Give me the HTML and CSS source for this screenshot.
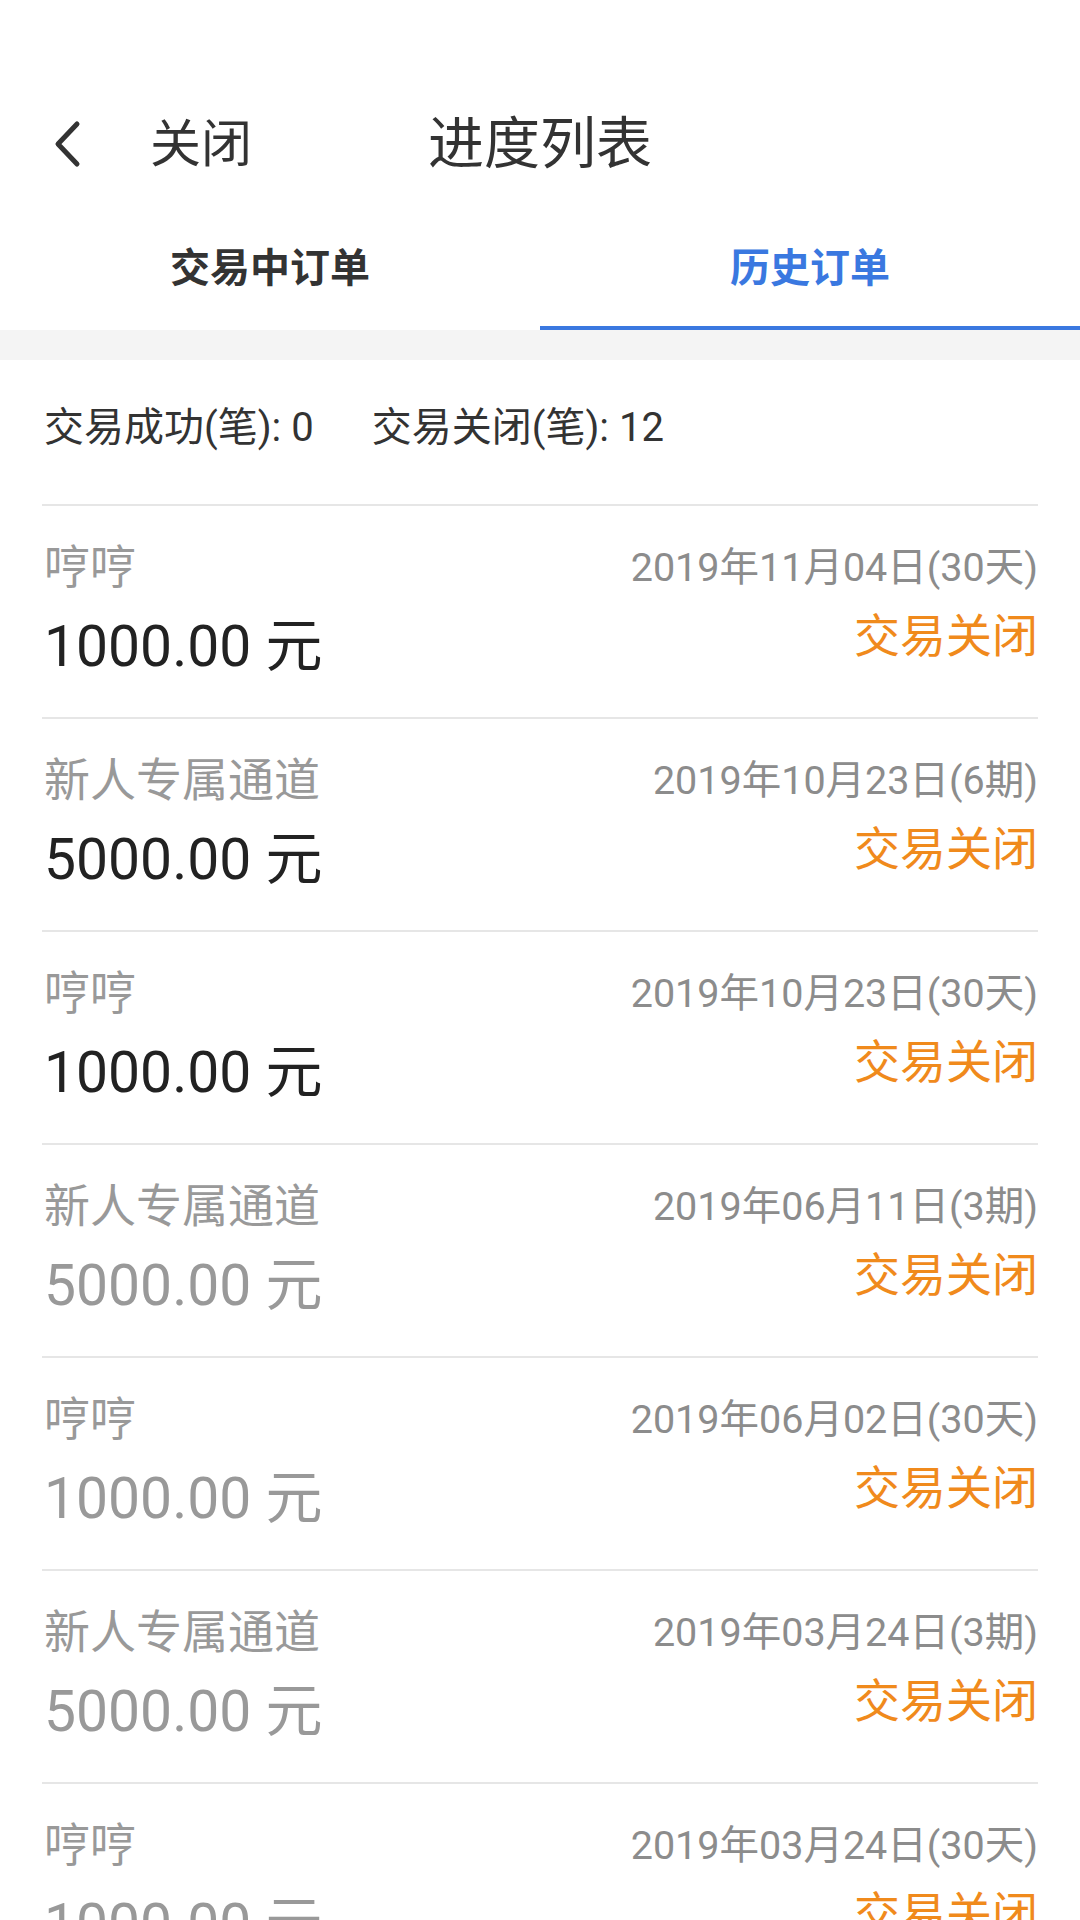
FILE: index.html
```html
<!DOCTYPE html>
<html lang="zh-CN">
<head>
   <meta charset="UTF-8">
   <meta name="viewport" content="width=device-width, initial-scale=1.0">
   <title>进度列表</title>

   <link rel="stylesheet" href="styles.css">
</head>
<body>

<header class="header">
	<a class="back" href="#">
		<svg class="back-icon" viewBox="0 0 32 48" width="32" height="48">
			<path d="M26 4 L7 24 L26 44" fill="none" stroke="#333" stroke-width="5" stroke-linecap="round" stroke-linejoin="round"/>
		</svg>
		<span class="back-text">关闭</span>
	</a>
	<h1 class="title">进度列表</h1>
</header>

<ul class="tab-list">
	<li class="tab-item">交易中订单</li>
	<li class="tab-item is-active">历史订单</li>
</ul>

<div class="gap"></div>

<div class="summary">
	<span>交易成功(笔): 0</span>
	<span>交易关闭(笔): 12</span>
</div>

<ul class="order-list">
	<li class="order">
		<div class="order-top">
			<span class="order-name">哼哼</span>
			<span class="order-date">2019年11月04日(30天)</span>
		</div>
		<div class="order-bottom">
			<span class="order-sum">1000.00 元</span>
			<span class="order-status">交易关闭</span>
		</div>
	</li>
	<li class="order">
		<div class="order-top">
			<span class="order-name">新人专属通道</span>
			<span class="order-date">2019年10月23日(6期)</span>
		</div>
		<div class="order-bottom">
			<span class="order-sum">5000.00 元</span>
			<span class="order-status">交易关闭</span>
		</div>
	</li>
	<li class="order">
		<div class="order-top">
			<span class="order-name">哼哼</span>
			<span class="order-date">2019年10月23日(30天)</span>
		</div>
		<div class="order-bottom">
			<span class="order-sum">1000.00 元</span>
			<span class="order-status">交易关闭</span>
		</div>
	</li>
	<li class="order is-old">
		<div class="order-top">
			<span class="order-name">新人专属通道</span>
			<span class="order-date">2019年06月11日(3期)</span>
		</div>
		<div class="order-bottom">
			<span class="order-sum">5000.00 元</span>
			<span class="order-status">交易关闭</span>
		</div>
	</li>
	<li class="order is-old">
		<div class="order-top">
			<span class="order-name">哼哼</span>
			<span class="order-date">2019年06月02日(30天)</span>
		</div>
		<div class="order-bottom">
			<span class="order-sum">1000.00 元</span>
			<span class="order-status">交易关闭</span>
		</div>
	</li>
	<li class="order is-old">
		<div class="order-top">
			<span class="order-name">新人专属通道</span>
			<span class="order-date">2019年03月24日(3期)</span>
		</div>
		<div class="order-bottom">
			<span class="order-sum">5000.00 元</span>
			<span class="order-status">交易关闭</span>
		</div>
	</li>
	<li class="order is-old">
		<div class="order-top">
			<span class="order-name">哼哼</span>
			<span class="order-date">2019年03月24日(30天)</span>
		</div>
		<div class="order-bottom">
			<span class="order-sum">1000.00 元</span>
			<span class="order-status">交易关闭</span>
		</div>
	</li>
</ul>

</body>
</html>
```

FILE: styles.css
```css
*,
::before,
::after {
    padding: 0;
    margin: 0;
    box-sizing: border-box;
}

html,
body {
    width: 1080px;
    height: 1920px;
    overflow: hidden;
    font-family: Roboto, "Noto Sans CJK SC", sans-serif;
    background-color: #fff;
    color: #333;
}

li {
    list-style-type: none;
}

/* header */
.header {
    display: flex;
    align-items: center;
    justify-content: center;
    height: 96px;
    margin-top: 96px;
    position: relative;
}

.back {
    position: absolute;
    left: 51px;
    top: 0;
    height: 96px;
    display: flex;
    align-items: center;
    gap: 67px;
    color: #333;
    text-decoration: none;
}

.back-icon {
    display: block;
}

.back-text {
    font-size: 51px;
    line-height: 1;
}

.title {
    font-size: 56px;
    font-weight: normal;
    line-height: 1;
    color: #333;
}

/* tabs */
.tab-list {
    display: flex;
    height: 138px;
}

.tab-item {
    flex: 1;
    display: flex;
    align-items: center;
    justify-content: center;
    padding-top: 12px;
    font-size: 40px;
    font-weight: bold;
    color: #333;
    border-bottom: 4px solid transparent;
}

.tab-item.is-active {
    color: #3a78e0;
    border-bottom-color: #3a78e0;
}

.gap {
    height: 30px;
    background: #f4f4f4;
}

/* summary */
.summary {
    display: flex;
    align-items: center;
    gap: 58px;
    height: 144px;
    padding: 0 44px 16px;
    font-size: 40px;
    color: #333;
}

/* orders */
.order-list {
    margin: 0 42px;
}

.order {
    height: 213px;
    padding: 33px 0 0 2px;
    border-top: 2px solid #e6e6e6;
}

.order-top {
    display: flex;
    justify-content: space-between;
    align-items: center;
    height: 48px;
}

.order-name {
    font-size: 46px;
    color: #999;
}

.order-date {
    font-size: 39.5px;
    color: #8c8c8c;
}

.order-bottom {
    display: flex;
    justify-content: space-between;
    align-items: center;
    height: 64px;
    margin-top: 22px;
}

.order-sum {
    font-size: 57px;
    color: #222;
}

.order-status {
    margin-bottom: 18px;
    font-size: 46px;
    color: #f08a1c;
}

.order.is-old .order-sum {
    color: #999;
}
```
